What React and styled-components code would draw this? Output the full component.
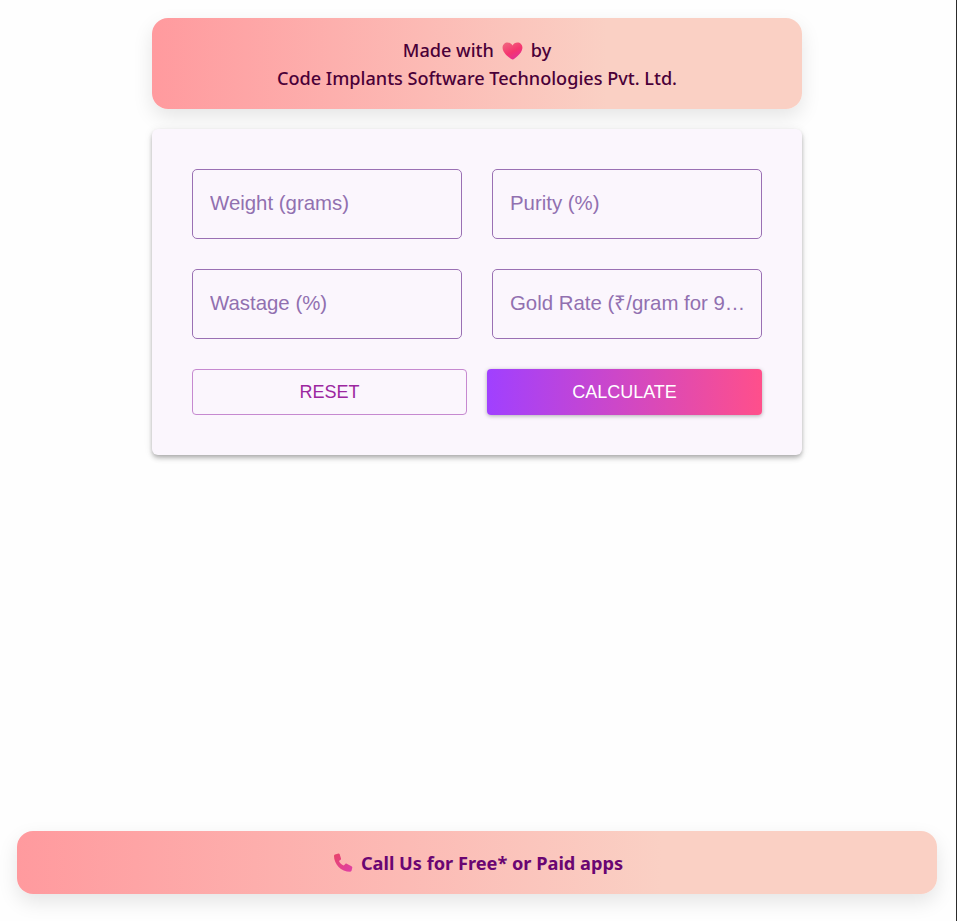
import React from "react";
import styled, { createGlobalStyle } from "styled-components";

const Global = createGlobalStyle`
  * { box-sizing: border-box; }
  html, body { margin: 0; padding: 0; background: #fff; }
  #root { min-height: 921px; }
`;

const Page = styled.div`
  width: 957px;
  height: 921px;
  border-right: 1px solid #2b2b2b;
  background: #fefefe;
  display: flex;
  flex-direction: column;
  align-items: center;
  padding: 18px 19px 27px 17px;
  overflow: hidden;
`;

const Banner = styled.header`
  width: 650px;
  height: 91px;
  flex: none;
  border-radius: 16px;
  background: linear-gradient(90deg, #ff9a9e 0%, #fad0c4 70%, #fad0c4 100%);
  box-shadow: 0 8px 20px rgba(0, 0, 0, 0.1);
  display: flex;
  flex-direction: column;
  align-items: center;
  justify-content: center;
  font-family: "Noto Sans", "Open Sans", sans-serif;
  font-weight: 500;
  font-size: 18.1px;
  line-height: 28px;
  color: #4a0038;
`;

const BannerLine = styled.div`
  display: flex;
  align-items: center;
  gap: 8px;
`;

const HeartWrap = styled.span`
  display: flex;
  margin-top: 2px;
`;

const Card = styled.main`
  width: 650px;
  flex: none;
  margin-top: 20px;
  padding: 40px;
  background: #fbf6fd;
  border-radius: 6px;
  box-shadow: 0 2px 4px -1px rgba(0, 0, 0, 0.22), 0 4px 5px rgba(0, 0, 0, 0.14), 0 1px 10px rgba(0, 0, 0, 0.08);
  display: flex;
  flex-direction: column;
  gap: 30px;
`;

const FieldGrid = styled.div`
  display: grid;
  grid-template-columns: 270px 270px;
  gap: 30px;
`;

const Field = styled.input`
  width: 270px;
  height: 70px;
  padding: 0 8px 2px 17px;
  border: 1px solid #9a70b4;
  border-radius: 5px;
  background: transparent;
  font-family: "Liberation Sans", Arial, sans-serif;
  font-size: 20.4px;
  color: #4a0038;
  outline: none;
  text-overflow: ellipsis;
  &::placeholder {
    color: #9170b0;
    opacity: 1;
    text-overflow: ellipsis;
  }
`;

const Actions = styled.div`
  display: grid;
  grid-template-columns: 275px 275px;
  gap: 20px;
`;

const ActionButton = styled.button`
  height: 46px;
  border-radius: 4px;
  font-family: "Liberation Sans", Arial, sans-serif;
  font-size: 18px;
  text-transform: uppercase;
  cursor: pointer;
  border: ${(p) => (p.$primary ? "none" : "1px solid #c689d0")};
  color: ${(p) => (p.$primary ? "#fff" : "#9c27a0")};
  background: ${(p) => (p.$primary ? "linear-gradient(90deg, #a040ff, #ff4f8b)" : "transparent")};
  box-shadow: ${(p) => (p.$primary ? "0 1px 4px rgba(0, 0, 0, 0.3)" : "none")};
`;

const Footer = styled.footer`
  width: 920px;
  height: 63px;
  flex: none;
  margin-top: auto;
  padding-left: 2px;
  border-radius: 16px;
  background: linear-gradient(90deg, #ff9a9e 0%, #fad0c4 70%, #fad0c4 100%);
  box-shadow: 0 8px 20px rgba(0, 0, 0, 0.1);
  display: flex;
  align-items: center;
  justify-content: center;
  gap: 8px;
  font-family: "Noto Sans", "Open Sans", sans-serif;
  font-weight: 700;
  font-size: 18.2px;
  color: #6a0572;
`;

const Heart = () => (
  <svg width="21" height="18" viewBox="0 0 21 18" aria-hidden="true">
    <defs>
      <linearGradient id="heartFill" x1="0.15" y1="0" x2="0.75" y2="1">
        <stop offset="0" stopColor="#f0677f" />
        <stop offset="0.55" stopColor="#f5356f" />
        <stop offset="1" stopColor="#e0309c" />
      </linearGradient>
    </defs>
    <path
      d="M10.5 17.6C9.6 17.6 1 11.8.6 6.2.3 2.8 2.7.5 5.5.5c2.2 0 4 1.2 5 3 1-1.8 2.8-3 5-3 2.8 0 5.2 2.3 4.9 5.7-.4 5.6-9 11.4-9.9 11.4z"
      fill="url(#heartFill)"
    />
  </svg>
);

const Phone = () => (
  <svg width="20" height="20" viewBox="0 0 20 20" aria-hidden="true">
    <defs>
      <linearGradient id="phoneFill" x1="0" y1="0" x2="1" y2="1">
        <stop offset="0" stopColor="#e84468" />
        <stop offset="1" stopColor="#e040a8" />
      </linearGradient>
    </defs>
    <path
      d="M2 1.5L5.5.5C6 .4 6.5.7 6.7 1.2L8 5.5C8.2 6 8 6.5 7.6 6.8L6 8C6.8 10 8.6 11.8 10.8 12.6L12.3 11C12.7 10.6 13.2 10.5 13.7 10.7L18.5 13.2C19.2 13.6 19.5 14.1 19.3 14.7L18.6 17.6C18.4 18.3 17.9 18.8 17.2 18.8C8 18.8 1 11 1 3C1 2.3 1.4 1.7 2 1.5Z"
      fill="url(#phoneFill)"
    />
  </svg>
);

export default function App() {
  return (
    <>
      <Global />
      <Page>
        <Banner>
          <BannerLine>
            Made with
            <HeartWrap>
              <Heart />
            </HeartWrap>
            by
          </BannerLine>
          <BannerLine>Code Implants Software Technologies Pvt. Ltd.</BannerLine>
        </Banner>
        <Card>
          <FieldGrid>
            <Field placeholder="Weight (grams)" />
            <Field placeholder="Purity (%)" />
            <Field placeholder="Wastage (%)" />
            <Field placeholder="Gold Rate (₹/gram for 916)" />
          </FieldGrid>
          <Actions>
            <ActionButton>Reset</ActionButton>
            <ActionButton $primary>Calculate</ActionButton>
          </Actions>
        </Card>
        <Footer>
          <Phone />
          Call Us for Free* or Paid apps
        </Footer>
      </Page>
    </>
  );
}
